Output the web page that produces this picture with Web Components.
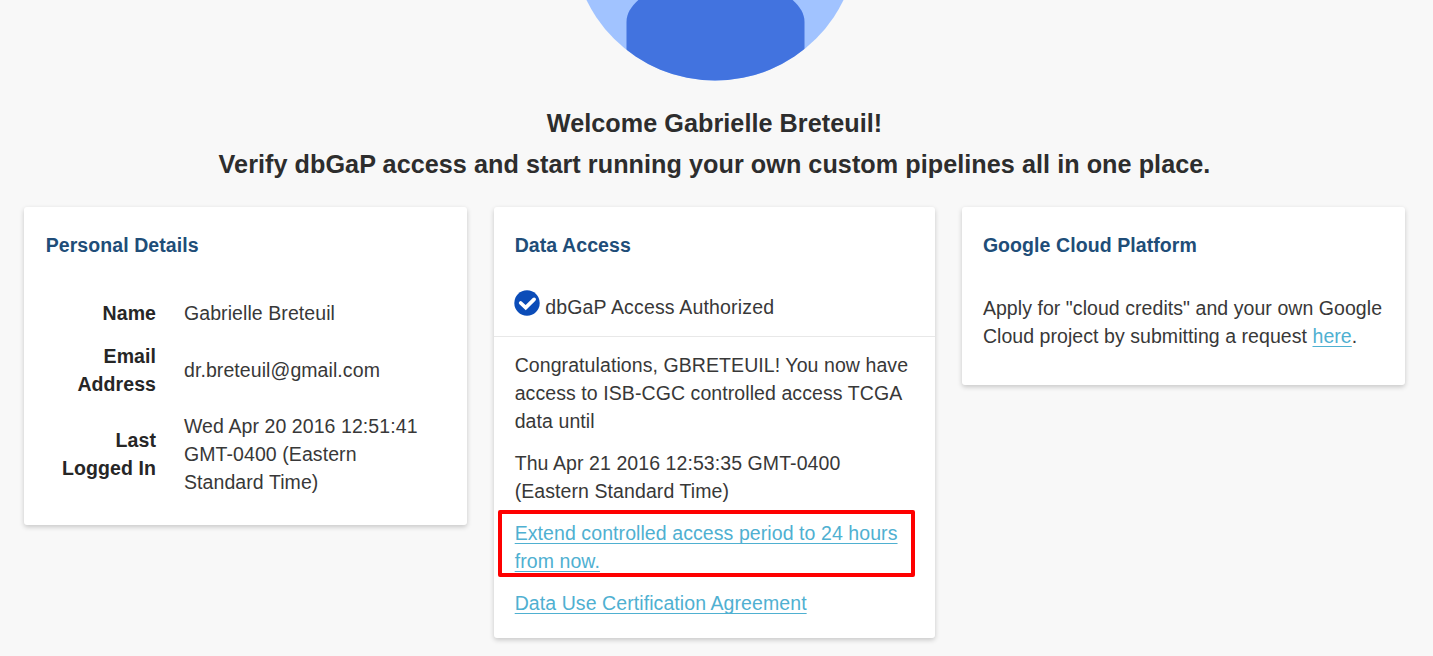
<!DOCTYPE html>
<html lang="en">
<head>
<meta charset="utf-8">
<title>Account Details</title>
<style>
html,body{margin:0;height:656px;overflow:hidden}
body{background:#f8f8f8;color:#383838;font:19.5px/27.85px "Liberation Sans",Arial,sans-serif;letter-spacing:.08px}
p{margin:0 0 14.2px}
p:last-child{margin-bottom:0}
a{color:#4fb0d1;text-decoration:underline;text-decoration-thickness:1.3px;text-underline-offset:3px;text-decoration-skip-ink:none}
.l{white-space:nowrap}
</style>
</head>
<body>
<account-page>
  <user-avatar slot="avatar"></user-avatar>
  <span slot="greeting">Welcome Gabrielle Breteuil!</span>
  <span slot="tagline">Verify dbGaP access and start running your own custom pipelines all in one place.</span>
  <info-card style="padding-left:21.7px">
    <span slot="title">Personal Details</span>
    <detail-list>
      <detail-row><span slot="label">Name</span>Gabrielle Breteuil</detail-row>
      <detail-row><span slot="label">Email<br>Address</span>dr.breteuil@gmail.com</detail-row>
      <detail-row><span slot="label">Last<br>Logged In</span><span class="l">Wed Apr 20 2016 12:51:41</span><br>GMT-0400 (Eastern<br>Standard Time)</detail-row>
    </detail-list>
  </info-card>
  <info-card style="padding-bottom:20.7px">
    <span slot="title">Data Access</span>
    <access-status>dbGaP Access Authorized</access-status>
    <p><span class="l">Congratulations, GBRETEUIL! You now have</span><br><span class="l">access to ISB-CGC controlled access TCGA</span><br>data until</p>
    <p>Thu Apr 21 2016 12:53:35 GMT-0400<br>(Eastern Standard Time)</p>
    <p><focus-frame><a><span class="l">Extend controlled access period to 24 hours</span><br>from now.</a></focus-frame></p>
    <p><a>Data Use Certification Agreement</a></p>
  </info-card>
  <info-card style="padding-bottom:35px">
    <span slot="title">Google Cloud Platform</span>
    <p style="padding-top:.4px;line-height:28px;letter-spacing:.06px"><span class="l">Apply for "cloud credits" and your own Google</span><br><span class="l">Cloud project by submitting a request <a>here</a>.</span></p>
  </info-card>
</account-page>
<script>
const define = (name, html) => customElements.define(name, class extends HTMLElement {
  constructor() {
    super();
    this.attachShadow({ mode: 'open' }).innerHTML = html;
  }
});

define('account-page', `
<style>
:host{display:block;height:656px;overflow:hidden}
header{display:flex;flex-direction:column;align-items:center;height:207px;width:1429px}
h1{margin:0;font-size:25.2px;line-height:41px;font-weight:700;color:#2d2d2d;white-space:nowrap;letter-spacing:.05px}
h1:first-of-type{margin-top:22px}
main{display:grid;grid-template-columns:443px 441.5px 443px;column-gap:26.7px;align-items:start;padding-left:24px}
</style>
<header><slot name="avatar"></slot><h1><slot name="greeting"></slot></h1><h1><slot name="tagline"></slot></h1></header>
<main><slot></slot></main>`);

define('user-avatar', `
<style>:host{display:block;height:81px}svg{display:block}</style>
<svg width="286" height="81" viewBox="571.5 0 286 81">
<defs><clipPath id="disc"><circle cx="714.5" cy="-62.2" r="142.8"/></clipPath></defs>
<circle cx="714.5" cy="-62.2" r="142.8" fill="#a1c3ff"/>
<path clip-path="url(#disc)" fill="#4273df" d="M626 82V22C626 13 631 6 639-1H791C799 6 804 13 804 22V82Z"/>
</svg>`);

define('info-card', `
<style>
:host{display:block;box-sizing:border-box;background:#fff;border-radius:3px;padding:24.5px 21px 21.5px;box-shadow:0 2px 5px rgba(0,0,0,.2)}
h2{margin:0 0 34px;font-size:19.5px;line-height:27.85px;font-weight:700;color:#204d78}
</style>
<h2><slot name="title"></slot></h2><slot></slot>`);

define('detail-list', `
<style>:host{display:grid;row-gap:14.7px;padding:6.8px 0 5.8px}</style><slot></slot>`);

define('detail-row', `
<style>
:host{display:grid;grid-template-columns:110.3px 1fr;column-gap:28px;align-items:center;line-height:27.95px}
b{text-align:right;color:#262626}
</style>
<b><slot name="label"></slot></b><div><slot></slot></div>`);

define('access-status', `
<style>
:host{display:flex;align-items:flex-start;gap:5px;margin:0 -21px 15.5px;padding:1px 21px 13.5px 20.5px;border-bottom:1px solid #e8e8e8;letter-spacing:.17px}
svg{display:block;flex:none;margin-top:-4px}
</style>
<svg width="26" height="26" viewBox="0 0 26 26"><circle cx="13" cy="13" r="12.7" fill="#0b4cb8"/><path d="M6.7 13 11.7 17.6 20.1 9.4" fill="none" stroke="#fff" stroke-width="3.7" stroke-linecap="round"/></svg>
<span><slot></slot></span>`);

define('focus-frame', `
<style>
:host{display:block;position:relative}
i{position:absolute;left:-17px;top:-9.7px;width:417px;height:67px;box-sizing:border-box;border:4px solid #fe0000;border-radius:2px;pointer-events:none}
</style>
<slot></slot><i></i>`);
</script>
</body>
</html>
